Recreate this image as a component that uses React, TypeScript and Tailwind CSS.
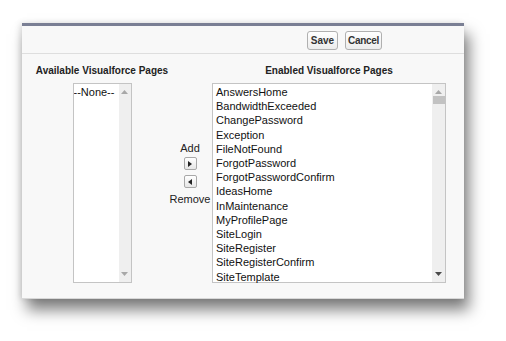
import React from "react";

const items = [
  "AnswersHome",
  "BandwidthExceeded",
  "ChangePassword",
  "Exception",
  "FileNotFound",
  "ForgotPassword",
  "ForgotPasswordConfirm",
  "IdeasHome",
  "InMaintenance",
  "MyProfilePage",
  "SiteLogin",
  "SiteRegister",
  "SiteRegisterConfirm",
  "SiteTemplate",
];

function Up() {
  return (
    <svg width="7" height="4" viewBox="0 0 7 4" className="block">
      <path d="M0 4 L3.5 0 L7 4 Z" fill="#a8a8a8" />
    </svg>
  );
}
function Down({ dark }: { dark?: boolean }) {
  return (
    <svg width="7" height="4" viewBox="0 0 7 4" className="block">
      <path d="M0 0 L3.5 4 L7 0 Z" fill={dark ? "#4a4a4a" : "#a8a8a8"} />
    </svg>
  );
}

export default function App() {
  return (
    <div
      className="w-[506px] h-[341px] bg-white relative"
      style={{ fontFamily: '"Liberation Sans", Arial, sans-serif' }}
    >
      <div className="absolute left-[22px] top-[23px] w-[442px] h-[276px] bg-[#f8f8f8] border-t-[3px] border-t-[#7a7f94] border-b border-b-[#d8d8d8] shadow-[-2px_0_6px_rgba(0,0,0,0.12),5px_11px_14px_rgba(0,0,0,0.5)] flex flex-col">
        <div className="h-[28px] shrink-0 flex items-center justify-end pr-[82px] gap-[7px] border-b border-[#dedede] pt-[2px]">
          <button className="w-[31px] h-[19px] text-[10px] font-bold text-[#333] bg-gradient-to-b from-white to-[#ececec] border border-[#b0b0b0] rounded-[3px] leading-none flex items-center justify-center">
            Save
          </button>
          <button className="w-[37px] h-[19px] text-[10px] font-bold text-[#333] bg-gradient-to-b from-white to-[#ececec] border border-[#b0b0b0] rounded-[3px] leading-none flex items-center justify-center tracking-[-0.3px]">
            Cancel
          </button>
        </div>
        <div className="flex pt-[11px] pl-[5px]">
          <div className="w-[150px] flex flex-col items-center">
            <div className="text-[10px] font-bold text-[#222] leading-[12px] mb-[6px] whitespace-nowrap">
              Available Visualforce Pages
            </div>
            <div className="w-[59px] h-[200px] bg-white border border-[#c4c4c4] flex">
              <div className="flex-1 text-[11px] leading-[14px] text-[#111] pt-[1px] whitespace-nowrap overflow-hidden">
                --None--
              </div>
              <div className="w-[12px] bg-[#efefef] flex flex-col items-center justify-between pt-[6px] pb-[6px]">
                <Up />
                <Down />
              </div>
            </div>
          </div>
          <div className="w-[26px] mr-[9px] flex flex-col items-center text-[11px] text-[#222] pt-[77px]">
            <div className="leading-[13px] mb-[2px]">Add</div>
            <div className="w-[13px] h-[13px] border border-[#a8a8a8] rounded-[2px] bg-gradient-to-b from-white to-[#e6e6e6] flex items-center justify-center mb-[5px]">
              <svg width="4" height="6" viewBox="0 0 4 6">
                <path d="M0 0 L4 3 L0 6 Z" fill="#222" />
              </svg>
            </div>
            <div className="w-[13px] h-[13px] border border-[#a8a8a8] rounded-[2px] bg-gradient-to-b from-white to-[#e6e6e6] flex items-center justify-center">
              <svg width="4" height="6" viewBox="0 0 4 6">
                <path d="M4 0 L0 3 L4 6 Z" fill="#222" />
              </svg>
            </div>
            <div className="leading-[13px] mt-[5px] whitespace-nowrap">Remove</div>
          </div>
          <div className="w-[234px] flex flex-col items-center">
            <div className="text-[10px] font-bold text-[#222] leading-[12px] mb-[6px] whitespace-nowrap">
              Enabled Visualforce Pages
            </div>
            <div className="w-[234px] h-[200px] bg-white border border-[#c4c4c4] flex">
              <div className="flex-1 pl-[3px] text-[11px] leading-[14.2px] text-[#111] pt-[1px]">
                {items.map((t) => (
                  <div key={t}>{t}</div>
                ))}
              </div>
              <div className="w-[13px] bg-[#efefef] flex flex-col items-center pt-[6px] pb-[6px]">
                <Up />
                <div className="w-[12px] h-[8px] bg-[#c2c2c2] mt-[2px]" />
                <div className="flex-1" />
                <Down dark />
              </div>
            </div>
          </div>
        </div>
      </div>
    </div>
  );
}
